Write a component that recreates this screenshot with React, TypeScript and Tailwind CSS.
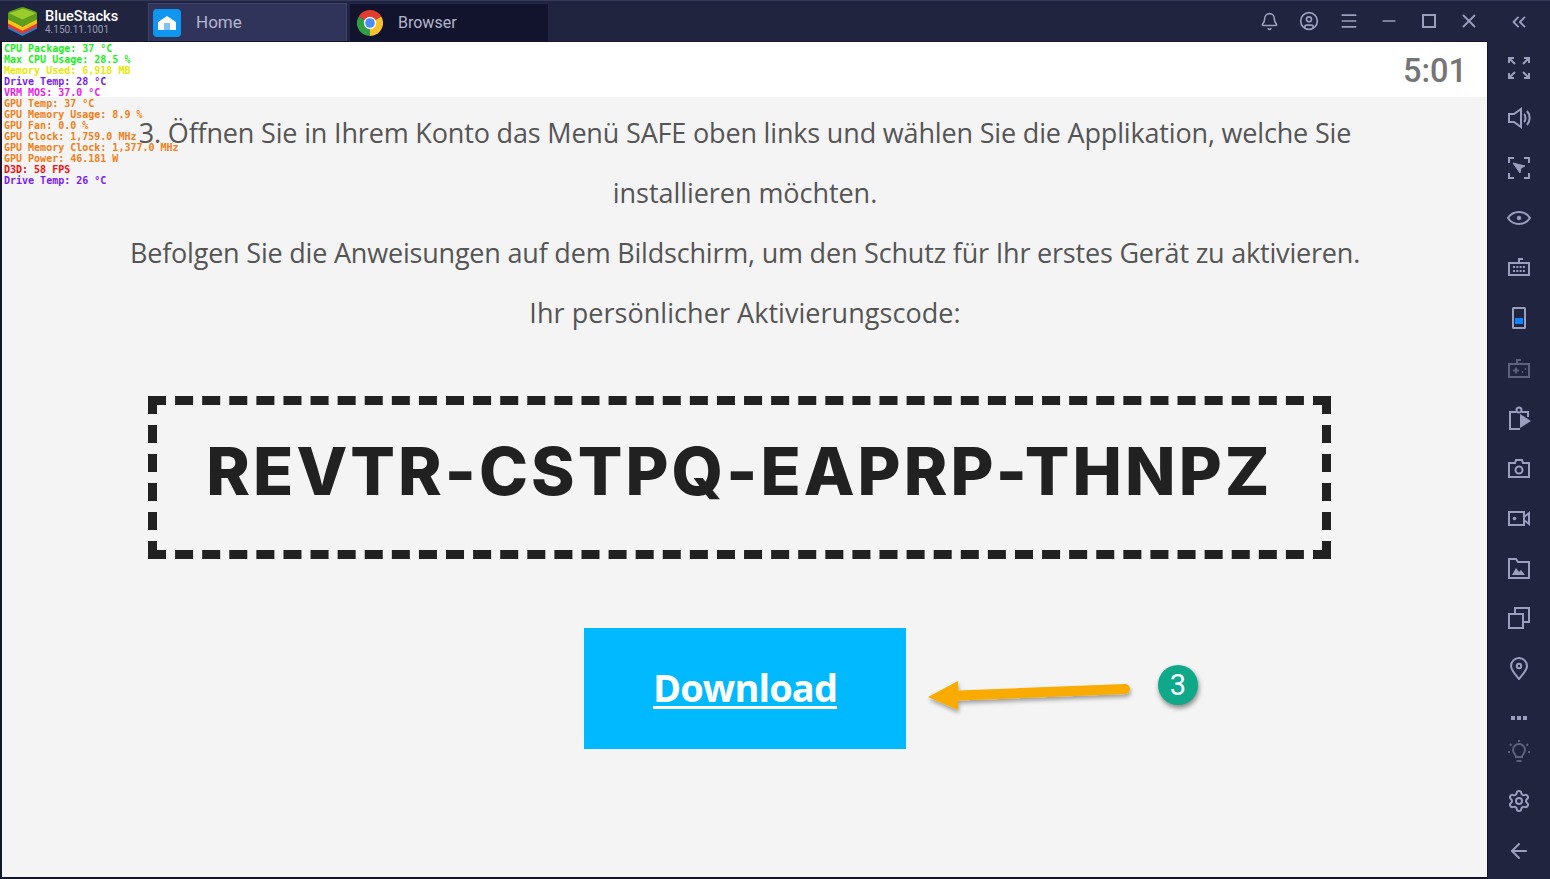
import React from "react";
import { Bell, CircleUser, Menu, Minus, X, ChevronsLeft, Settings, ArrowLeft } from "lucide-react";

const Ico = ({ children, dim }: { children: React.ReactNode; dim?: boolean }) => (
  <svg width="24" height="24" viewBox="0 0 24 24" fill="none" stroke="currentColor" strokeWidth="2" className={dim ? "opacity-50" : ""}>
    {children}
  </svg>
);

const osd: [string, string][] = [
  ["CPU Package: 37 °C", "text-[#1cf01c]"],
  ["Max CPU Usage: 28.5 %", "text-[#1cf01c]"],
  ["Memory Used: 6,918 MB", "text-[#e8e800]"],
  ["Drive Temp: 28 °C", "text-[#7a1cf0]"],
  ["VRM MOS: 37.0 °C", "text-[#e81ce8]"],
  ["GPU Temp: 37 °C", "text-[#f08018]"],
  ["GPU Memory Usage: 8.9 %", "text-[#f08018]"],
  ["GPU Fan: 0.0 %", "text-[#f08018]"],
  ["GPU Clock: 1,759.0 MHz", "text-[#f08018]"],
  ["GPU Memory Clock: 1,377.0 MHz", "text-[#f08018]"],
  ["GPU Power: 46.181 W", "text-[#f08018]"],
  ["D3D: 58 FPS", "text-[#f01010]"],
  ["Drive Temp: 26 °C", "text-[#7a1cf0]"],
];

const side: { key: string; dim?: boolean; el: React.ReactNode }[] = [
  { key: "full", el: <><path d="M2 2l6 6M2 7V2h5M22 2l-6 6M17 2h5v5M2 22l6-6M2 17v5h5M22 22l-6-6M22 17v5h-5" /></> },
  { key: "vol", el: <><path d="M2 8h5l7-5v18l-7-5H2z" /><path d="M17 8c2 2 2 6 0 8M20 5c3.500 4 3.500 10 0 14" /></> },
  { key: "cursor", el: <><path d="M2 7V2h5M17 2h5v5M2 17v5h5M22 17v5h-5" /><path d="M6 7l12 3-4 2-1 5z" fill="currentColor" strokeWidth="1" /></> },
  { key: "eye", el: <><path d="M1 12c5-8 17-8 22 0-5 8-17 8-22 0z" /><circle cx="12" cy="12" r="2" fill="currentColor" strokeWidth="0.500" /></> },
  { key: "kb", el: <><path d="M2 7h20v12H2z" /><path d="M12 7V3h4" /><path d="M6 11h12M6 15h12" strokeDasharray="2 1.300" /></> },
  { key: "phone", el: <><rect x="6" y="2" width="12" height="20" rx="0.500" /><rect x="8" y="12" width="8" height="6" fill="#0a84ff" stroke="none" /></> },
  { key: "pad", dim: true, el: <><path d="M2 8h20v13H2z" /><path d="M10 8V4h4" /><path d="M6 14.500h6M9 11.500v6M15 16h1M18 13h1" /></> },
  { key: "clip", el: <><path d="M9 6H3v17h10" /><path d="M15 6h6v5" /><circle cx="12" cy="4" r="2.500" /><path d="M13 11l11 7-11 7z" fill="currentColor" stroke="none" transform="translate(0 -3)" /></> },
  { key: "cam", el: <><path d="M2 7h6l1-3h6l1 3h6v14H2z" /><circle cx="12" cy="14" r="3.500" /></> },
  { key: "vid", el: <><path d="M2 6h15v13H2z" /><path d="M17 11l5-4v11l-5-4" /><circle cx="7.500" cy="12.500" r="1.800" fill="currentColor" stroke="none" /></> },
  { key: "folder", el: <><path d="M2 3h7l2 3h11v16H2z" /><path d="M5 19l4-7 3 4 2-2 4 5z" fill="currentColor" stroke="none" /></> },
  { key: "copy", el: <><path d="M8 8V2h14v14h-6" /><path d="M2 8h14v14H2z" /><path d="M8 8h8v8" strokeWidth="1.500" /></> },
  { key: "pin", el: <><path d="M12 23C7 17 4 14 4 10a8 8 0 0 1 16 0c0 4-3 7-8 13z" /><circle cx="12" cy="10" r="2.200" /></> },
];

const topIcon = "w-10 flex items-center justify-center text-[#9b9ebd]";

function Logo() {
  return (
    <svg width="31" height="29" viewBox="0 0 30 28">
      <path d="M1 17l14 8 14-8v4L15 28 1 21z" fill="#1e7fd6" />
      <path d="M1 14l14 8 14-8v5l-14 7-14-7z" fill="#e53935" />
      <path d="M1 11l14 8 14-8v5l-14 7-14-7z" fill="#f5c518" />
      <path d="M1 6c0-1 1-1.500 2-2l10-3.500c1-.4 3-.4 4 0L27 4c1 .5 2 1 2 2v6l-14 7-14-7z" fill="#5f9e1c" />
      <path d="M2 6l12-4c1-.3 2-.3 3 0l11 4-13 6z" fill="#9ccc2c" />
    </svg>
  );
}

function Chrome() {
  return (
    <svg width="26" height="26" viewBox="0 0 26 26">
      <path d="M13 13L1.740 6.500A13 13 0 0 1 24.260 6.500z" fill="#e33b2e" />
      <path d="M13 13L24.260 6.500A13 13 0 0 1 13 26z" fill="#fbc02d" />
      <path d="M13 13L13 26A13 13 0 0 1 1.740 6.500z" fill="#2f9e44" />
      <circle cx="13" cy="13" r="6.200" fill="#fff" />
      <circle cx="13" cy="13" r="4.800" fill="#4a8cf0" />
    </svg>
  );
}

export default function App() {
  return (
    <div className="relative flex h-[879px] w-[1550px] overflow-hidden bg-[#20243f] [font-family:'Open_Sans',sans-serif]">
      <div className="flex w-[1488px] flex-col border-l-2 border-b-2 border-[#14152c]">
        <div className="-ml-[2px] flex h-[42px] shrink-0 items-end border-t border-b border-t-[#34385c] border-b-[#14152c] bg-[#20243f] pl-[7px]">
          <div className="flex h-full w-[141px] items-center gap-[7px] pt-px">
            <Logo />
            <div className="flex flex-col [font-family:Roboto,sans-serif]">
              <span className="text-[14.600px] leading-[15px] font-medium text-white">BlueStacks</span>
              <span className="text-[10px] leading-[11px] text-[#9a9db5]">4.150.11.1001</span>
            </div>
          </div>
          <div className="flex h-[38px] w-[199px] items-center gap-[15px] border border-b-0 border-[#3f4368] bg-[#30345a] pl-[4px] pt-px">
            <div className="flex h-[28px] w-[28px] items-end justify-center rounded-[4px] bg-[#0f96f0] pb-[7px]">
              <svg width="18" height="14" viewBox="0 0 18 14">
                <path d="M0 6L9 0l9 6v8H0z" fill="#fff" />
                <rect x="6" y="7" width="6" height="7" fill="#7cc4f8" />
              </svg>
            </div>
            <span className="text-[17px] text-[#b4b6cc] [font-family:Roboto,sans-serif]">Home</span>
          </div>
          <div className="ml-[2px] flex h-[38px] w-[200px] items-center gap-[15px] border border-b-0 border-[#23264a] bg-[#12132c] pl-[7px] pt-px">
            <Chrome />
            <span className="text-[16px] text-[#b4b6cc] [font-family:Roboto,sans-serif]">Browser</span>
          </div>
          <div className="ml-auto mr-[-1px] flex h-full items-center">
            <div className={topIcon}><Bell size={19} strokeWidth={2} /></div>
            <div className={topIcon}><CircleUser size={20} strokeWidth={2} /></div>
            <div className={topIcon}><Menu size={20} strokeWidth={2} /></div>
            <div className={topIcon}><Minus size={20} strokeWidth={2} /></div>
            <div className={topIcon}><div className="h-[14px] w-[14px] border-2 border-[#9b9ebd]" /></div>
            <div className={topIcon}><X size={22} strokeWidth={2} /></div>
          </div>
        </div>

        <div className="flex h-[55px] shrink-0 items-center justify-end bg-white pr-[21px] pt-[3px] shadow-[inset_-1px_0_0_#14152c]">
          <span className="text-[32.500px] font-medium text-[#757575] [font-family:Roboto,sans-serif]">5:01</span>
        </div>

        <div className="flex flex-1 flex-col items-center bg-[#f4f4f4] pt-[6px] text-[27px] leading-[60px] text-[#555] shadow-[inset_-1px_0_0_#14152c]">
          <p className="whitespace-nowrap tracking-[-0.17px]">3. Öffnen Sie in Ihrem Konto das Menü SAFE oben links und wählen Sie die Applikation, welche Sie</p>
          <p className="whitespace-nowrap tracking-[-0.05px]">installieren möchten.</p>
          <p className="whitespace-nowrap tracking-[-0.2px]">Befolgen Sie die Anweisungen auf dem Bildschirm, um den Schutz für Ihr erstes Gerät zu aktivieren.</p>
          <p className="whitespace-nowrap tracking-[0.05px]">Ihr persönlicher Aktivierungscode:</p>
          <div className="mt-[53px] -ml-[11px] flex h-[163px] w-[1183px] items-center justify-center border-[9px] border-dashed border-[#212121] pb-[14px]">
            <span className="text-[66px] leading-none font-extrabold tracking-[3.07px] text-[#212121] [font-family:Inter,sans-serif]">REVTR-CSTPQ-EAPRP-THNPZ</span>
          </div>
          <div className="mt-[69px] flex h-[121px] w-[322px] items-center justify-center bg-[#00b9ff] pb-[3px]">
            <span className="text-[38px] leading-none font-bold tracking-[-0.9px] text-white underline decoration-[3px] underline-offset-[4px] [font-family:'Open_Sans',sans-serif]">Download</span>
          </div>
        </div>
      </div>

      <div className="flex w-[62px] flex-col items-center border-t border-[#34385c] text-[#9b9ebd]">
        <div className="flex h-[42px] items-center"><ChevronsLeft size={22} strokeWidth={2} /></div>
        <div className="flex flex-col">
          {side.map((s) => (
            <div key={s.key} className="flex h-[50px] w-[50px] items-center justify-center">
              <Ico dim={s.dim}>{s.el}</Ico>
            </div>
          ))}
        </div>
        <div className="flex h-[50px] items-center gap-[2px]">
          <span className="h-[4px] w-[4px] bg-[#9b9ebd]" />
          <span className="h-[4px] w-[4px] bg-[#9b9ebd]" />
          <span className="h-[4px] w-[4px] bg-[#9b9ebd]" />
        </div>
        <div className="-mt-[17px] flex h-[50px] items-center opacity-50">
          <Ico><path d="M12 1v2M3 5l1.500 1.500M21 5l-1.500 1.500M1 13h2M21 13h2M9 18c0-3-3-3-3-7a6 6 0 0 1 12 0c0 4-3 4-3 7zM9.500 22h5" /></Ico>
        </div>
        <div className="flex h-[50px] items-center"><Settings size={24} strokeWidth={2} /></div>
        <div className="flex h-[50px] items-center"><ArrowLeft size={24} strokeWidth={2} /></div>
      </div>

      <div className="absolute left-[4px] top-[43px] font-bold [font-family:'DejaVu_Sans_Mono',monospace] text-[10px] leading-[11px]">
        {osd.map(([t, c]) => (
          <div key={t} className={c + " whitespace-pre"}>{t}</div>
        ))}
      </div>

      <svg className="absolute left-[920px] top-[670px]" width="225" height="50" viewBox="0 0 225 50">
        <defs>
          <filter id="sh" x="-10%" y="-30%" width="120%" height="170%">
            <feDropShadow dx="1" dy="3" stdDeviation="2" floodColor="#000" floodOpacity="0.35" />
          </filter>
        </defs>
        <path d="M8 27L38 11V20.500L205 14a5 5 0 0 1 0 10L38 30.500V40z" fill="#f9ab05" filter="url(#sh)" />
      </svg>
      <div className="absolute left-[1158px] top-[665px] flex h-[40px] w-[40px] items-center justify-center rounded-full bg-[#0fa888] pt-[1px] text-[29px] text-white shadow-[1px_3px_5px_rgba(0,0,0,0.45)] [font-family:Roboto,sans-serif]">3</div>
    </div>
  );
}
